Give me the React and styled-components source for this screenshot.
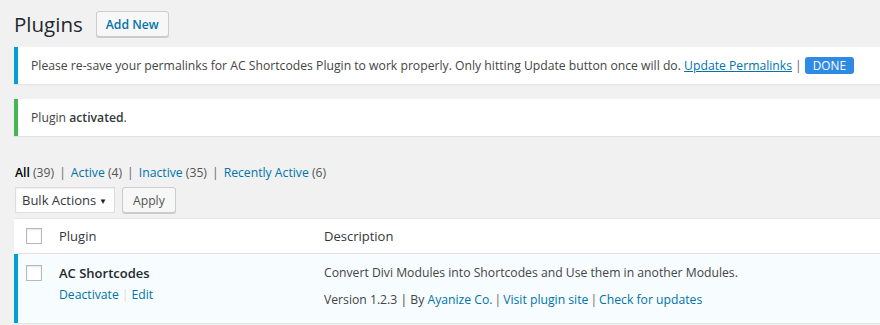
import styled, { createGlobalStyle } from 'styled-components';

const Global = createGlobalStyle`
  body {
    margin: 0;
    background: #f1f1f1;
    font-family: 'Open Sans', 'Liberation Sans', sans-serif;
    font-size: 12.2px;
    color: #444;
    overflow: hidden;
  }
`;

const Wrap = styled.div`
  padding: 0 0 0 14px;
  width: 900px;
`;

const Header = styled.div`
  display: flex;
  align-items: center;
  gap: 13px;
  height: 46px;
  padding-top: 1px;
`;

const Title = styled.h1`
  margin: 0;
  font-size: 20.5px;
  font-weight: 400;
  color: #23282d;
`;

const Button = styled.button`
  font-family: inherit;
  font-size: 12.2px;
  height: 26px;
  padding: 0 ${p => p.$px || 10}px;
  border: 1px solid #ccc;
  border-radius: 3px;
  background: #f7f7f7;
  box-shadow: 0 1px 0 #ccc;
  color: ${p => p.$primary ? '#0073aa' : '#555'};
  font-weight: ${p => p.$primary ? 600 : 400};
  cursor: pointer;
`;

const Notice = styled.div`
  display: flex;
  align-items: center;
  height: 37px;
  padding: 0 12px 0 13px;
  background: #fff;
  border-left: 4px solid ${p => p.$color};
  box-shadow: 0 1px 1px rgba(0,0,0,.06);
  margin-bottom: ${p => p.$mb || 0}px;
  white-space: nowrap;
  color: #444;
  b { color: #32373c; font-weight: 600; }
`;

const Link = styled.a`
  color: #0073aa;
  text-decoration: ${p => p.$underline ? 'underline' : 'none'};
`;

const Sep = styled.span`
  color: ${p => p.$light ? '#ddd' : '#666'};
  margin: 0 ${p => p.$gap ?? 4}px;
`;

const Done = styled.span`
  display: inline-block;
  background: #2f8ae4;
  color: #fff;
  border-radius: 3px;
  padding: 1px 8px;
  line-height: 15px;
  font-size: 11.8px;
`;

const Filters = styled.div`
  display: flex;
  align-items: center;
  height: 24px;
  margin-top: 24px;
  padding-left: 1px;
  color: #666;
  white-space: pre;
`;

const FilterItem = styled.span`
  color: #555;
  b { color: #000; font-weight: 600; }
`;

const TableNav = styled.div`
  display: flex;
  gap: 7px;
  margin: 3px 0 5px 1px;
  height: 26px;
`;

const Select = styled.div`
  display: flex;
  align-items: center;
  justify-content: space-between;
  width: 100px;
  height: 26px;
  box-sizing: border-box;
  padding: 0 7px 0 6px;
  background: #fff;
  border: 1px solid #ddd;
  box-shadow: inset 0 1px 2px rgba(0,0,0,.07);
  color: #32373c;
  font-size: 13px;
  white-space: nowrap;
  span:last-child { font-size: 8px; color: #222; }
`;

const Table = styled.div`
  background: #fff;
  border: 1px solid #e5e5e5;
  border-right: none;
  box-shadow: 0 1px 1px rgba(0,0,0,.04);
`;

const Row = styled.div`
  display: grid;
  grid-template-columns: 41px 265px 1fr;
  background: ${p => p.$active ? '#f7fcfe' : '#fff'};
  border-left: 4px solid ${p => p.$active ? '#00a0d2' : 'transparent'};
  margin-left: -1px;
  border-bottom: ${p => p.$head ? '1px solid #e1e1e1' : 'none'};
  height: ${p => p.$h}px;
  box-sizing: border-box;
  padding-top: ${p => p.$pt}px;
`;

const CheckCell = styled.div`
  padding-left: 8px;
`;

const Checkbox = styled.div`
  width: 16px;
  height: 16px;
  box-sizing: border-box;
  border: 1px solid #b4b9be;
  background: #fff;
  box-shadow: inset 0 1px 2px rgba(0,0,0,.1);
  margin-top: ${p => p.$mt || 0}px;
`;

const HeadText = styled.div`
  font-size: 13px;
  color: #32373c;
  line-height: 16px;
`;

const PluginName = styled.div`
  font-size: 13px;
  font-weight: 600;
  color: #23282d;
  line-height: 18px;
`;

const Actions = styled.div`
  margin-top: 4px;
`;

const DescText = styled.div`
  color: #444;
  line-height: 18px;
  margin-top: ${p => p.$mt || 0}px;
`;

export default function App() {
  return (
    <Wrap>
      <Global />
      <Header>
        <Title>Plugins</Title>
        <Button $primary $px={9}>Add New</Button>
      </Header>
      <Notice $color="#00a0d2" $mb={15}>
        Please re-save your permalinks for AC Shortcodes Plugin to work properly. Only hitting Update button once will do.&nbsp;
        <Link $underline href="#">Update Permalinks</Link>
        <Sep $gap={3}>|</Sep>
        <Done>DONE</Done>
      </Notice>
      <Notice $color="#46b450">
        Plugin&nbsp;<b>activated</b>.
      </Notice>
      <Filters>
        <FilterItem><b>All</b> (39)</FilterItem>
        <Sep $gap={5}>|</Sep>
        <Link href="#">Active <FilterItem>(4)</FilterItem></Link>
        <Sep $gap={5}>|</Sep>
        <Link href="#">Inactive <FilterItem>(35)</FilterItem></Link>
        <Sep $gap={5}>|</Sep>
        <Link href="#">Recently Active <FilterItem>(6)</FilterItem></Link>
      </Filters>
      <TableNav>
        <Select><span>Bulk Actions</span><span>▼</span></Select>
        <Button $px={10}>Apply</Button>
      </TableNav>
      <Table>
        <Row $head $h={35} $pt={9}>
          <CheckCell><Checkbox /></CheckCell>
          <HeadText>Plugin</HeadText>
          <HeadText>Description</HeadText>
        </Row>
        <Row $active $h={69} $pt={10}>
          <CheckCell><Checkbox $mt={1} /></CheckCell>
          <div>
            <PluginName>AC Shortcodes</PluginName>
            <Actions>
              <Link href="#">Deactivate</Link>
              <Sep $light $gap={3}>|</Sep>
              <Link href="#">Edit</Link>
            </Actions>
          </div>
          <div>
            <DescText>Convert Divi Modules into Shortcodes and Use them in another Modules.</DescText>
            <DescText $mt={9}>
              Version 1.2.3 | By <Link href="#">Ayanize Co.</Link>
              <Sep $gap={2}>|</Sep><Link href="#">Visit plugin site</Link>
              <Sep $gap={2}>|</Sep><Link href="#">Check for updates</Link>
            </DescText>
          </div>
        </Row>
      </Table>
    </Wrap>
  );
}
